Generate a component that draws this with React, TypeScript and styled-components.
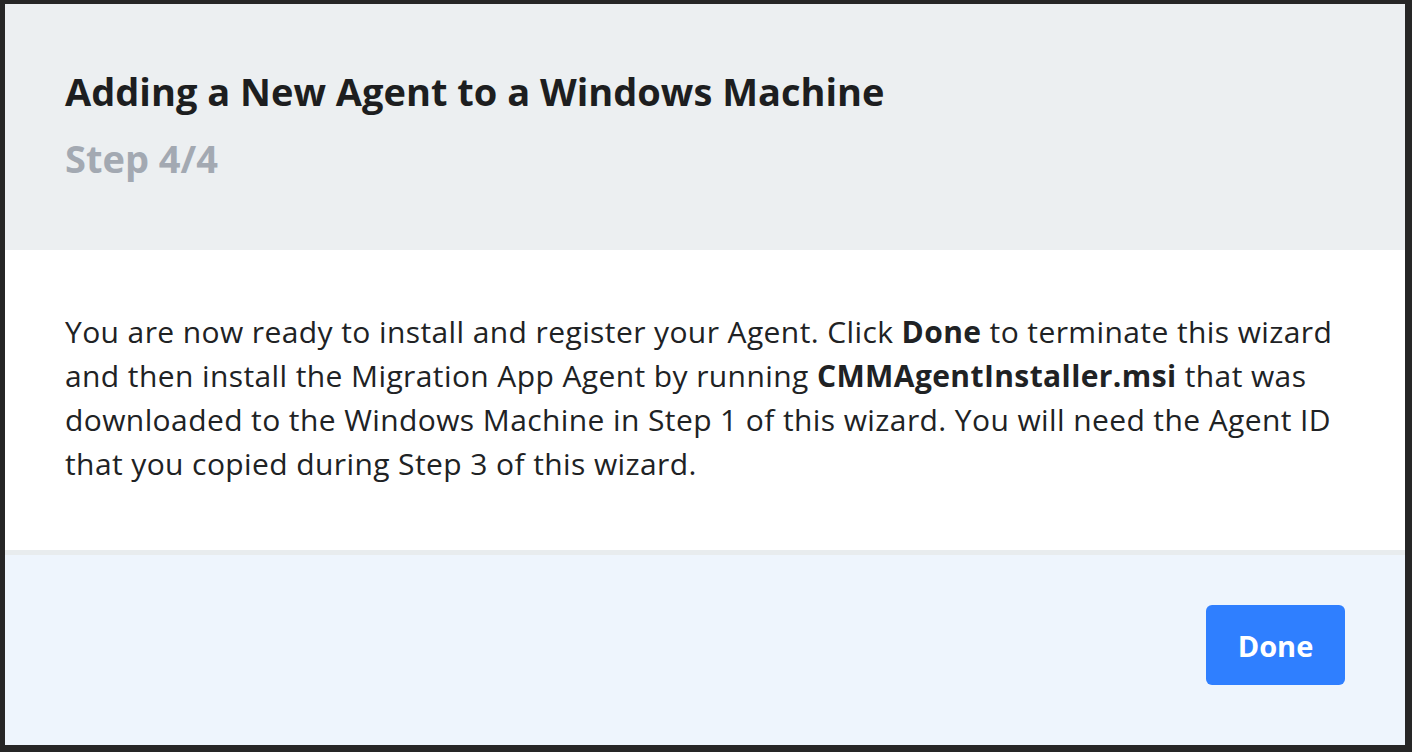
import React from 'react';
import styled, { createGlobalStyle } from 'styled-components';

const GlobalStyle = createGlobalStyle`
  html, body {
    margin: 0;
    padding: 0;
    background: #262626;
  }
  * {
    box-sizing: border-box;
  }
`;

const Backdrop = styled.div`
  height: 752px;
  padding: 4px 7px 7px 5px;
  display: flex;
  background: #262626;
`;

const Modal = styled.div`
  flex: 1;
  display: flex;
  flex-direction: column;
  background: #ffffff;
  font-family: "Open Sans", "Noto Sans", sans-serif;
  overflow: hidden;
`;

const Header = styled.header`
  height: 246px;
  padding: 63px 60px 0 60px;
  background: #eceff1;
`;

const Title = styled.h1`
  margin: 0;
  font-size: 38px;
  line-height: 48px;
  font-weight: 700;
  color: #1d1e20;
`;

const StepLabel = styled.div`
  margin-top: 20px;
  font-size: 38px;
  line-height: 46px;
  font-weight: 700;
  color: #a3a9b2;
`;

const Body = styled.section`
  height: 300px;
  padding: 60px 60px 0 60px;
`;

const Paragraph = styled.p`
  margin: 0;
  font-size: 30px;
  line-height: 44px;
  letter-spacing: 0.4px;
  color: #202224;

  strong {
    font-weight: 700;
  }
`;

const Footer = styled.footer`
  flex: 1;
  display: flex;
  justify-content: flex-end;
  align-items: flex-start;
  padding: 50px 60px 0 60px;
  background: #eef5fd;
  border-top: 5px solid #e8ecee;
`;

const Button = styled.button<{ $primary?: boolean }>`
  width: 139px;
  height: 80px;
  border: none;
  border-radius: 6px;
  background: ${(p) => (p.$primary ? '#2f7fff' : '#e4e8eb')};
  color: ${(p) => (p.$primary ? '#ffffff' : '#202224')};
  font-family: "Open Sans", "Noto Sans", sans-serif;
  font-size: 29px;
  font-weight: 700;
  cursor: pointer;
`;

export default function App() {
  return (
    <>
      <GlobalStyle />
      <Backdrop>
        <Modal>
          <Header>
            <Title>Adding a New Agent to a Windows Machine</Title>
            <StepLabel>Step 4/4</StepLabel>
          </Header>
          <Body>
            <Paragraph>
              You are now ready to install and register your Agent. Click <strong>Done</strong> to
              terminate this wizard and then install the Migration App Agent by running{' '}
              <strong>CMMAgentInstaller.msi</strong> that was downloaded to the Windows Machine in
              Step 1 of this wizard. You will need the Agent ID that you copied during Step 3 of
              this wizard.
            </Paragraph>
          </Body>
          <Footer>
            <Button $primary>Done</Button>
          </Footer>
        </Modal>
      </Backdrop>
    </>
  );
}
